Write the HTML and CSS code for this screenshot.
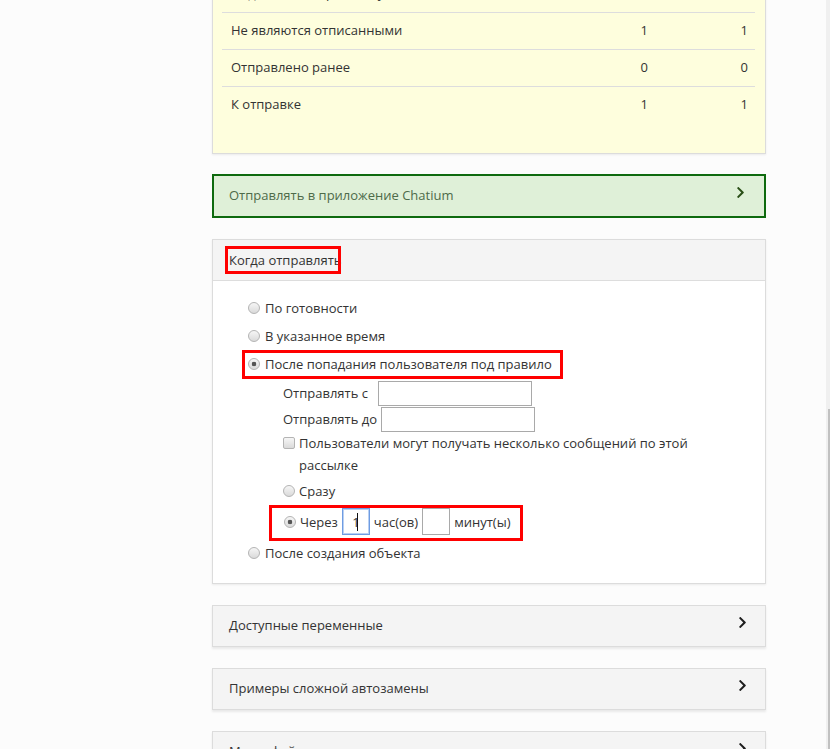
FILE: index.html
```html
<!DOCTYPE html>
<html lang="ru">
<head>
<meta charset="utf-8">
<title>Рассылка</title>
<link rel="stylesheet" href="styles.css">
</head>
<body>
<div class="page">
  <div class="panel panel-stats">
    <div class="stat-row"><span>Подписаны на рассылку</span><span class="num">1</span><span class="num">1</span></div>
    <div class="stat-row"><span>Не являются отписанными</span><span class="num">1</span><span class="num">1</span></div>
    <div class="stat-row"><span>Отправлено ранее</span><span class="num">0</span><span class="num">0</span></div>
    <div class="stat-row"><span>К отправке</span><span class="num">1</span><span class="num">1</span></div>
  </div>

  <div class="panel panel-success">
    <span>Отправлять в приложение Chatium</span>
    <svg class="chev" viewBox="0 0 320 512"><path d="M285.476 272.971L91.132 467.314c-9.373 9.373-24.569 9.373-33.941 0l-22.667-22.667c-9.357-9.357-9.375-24.522-.04-33.901L188.505 256 34.484 101.255c-9.335-9.379-9.317-24.544.04-33.901l22.667-22.667c9.373-9.373 24.569-9.373 33.941 0L285.475 239.03c9.373 9.372 9.373 24.568.001 33.941z"/></svg>
  </div>

  <div class="panel panel-when">
    <div class="panel-heading"><span class="mark-title">Когда отправлять</span></div>
    <div class="panel-body">
      <div class="opt"><label class="choice"><input type="radio" name="when"> По готовности</label></div>
      <div class="opt"><label class="choice"><input type="radio" name="when"> В указанное время</label></div>
      <div class="opt"><label class="choice mark-rule"><input type="radio" name="when" checked> После попадания пользователя под правило</label></div>
      <div class="sub">
        <div class="field"><span class="lbl-from">Отправлять с</span><input type="text" class="txt"></div>
        <div class="field"><span>Отправлять до</span><input type="text" class="txt"></div>
        <label class="check"><input type="checkbox"><span class="check-text">Пользователи могут получать несколько сообщений по этой рассылке</span></label>
        <div class="opt opt-sub"><label class="choice"><input type="radio" name="delay"> Сразу</label></div>
        <div class="mark-delay">
          <input type="radio" name="delay" checked>
          <span>Через</span>
          <span class="caret-wrap"><input type="text" class="small focus" value="1"></span>
          <span>час(ов)</span>
          <input type="text" class="small">
          <span>минут(ы)</span>
        </div>
      </div>
      <div class="opt opt-last"><label class="choice"><input type="radio" name="when"> После создания объекта</label></div>
    </div>
  </div>

  <div class="panel panel-collapsed">
    <span>Доступные переменные</span>
    <svg class="chev" viewBox="0 0 320 512"><path d="M285.476 272.971L91.132 467.314c-9.373 9.373-24.569 9.373-33.941 0l-22.667-22.667c-9.357-9.357-9.375-24.522-.04-33.901L188.505 256 34.484 101.255c-9.335-9.379-9.317-24.544.04-33.901l22.667-22.667c9.373-9.373 24.569-9.373 33.941 0L285.475 239.03c9.373 9.372 9.373 24.568.001 33.941z"/></svg>
  </div>

  <div class="panel panel-collapsed">
    <span>Примеры сложной автозамены</span>
    <svg class="chev" viewBox="0 0 320 512"><path d="M285.476 272.971L91.132 467.314c-9.373 9.373-24.569 9.373-33.941 0l-22.667-22.667c-9.357-9.357-9.375-24.522-.04-33.901L188.505 256 34.484 101.255c-9.335-9.379-9.317-24.544.04-33.901l22.667-22.667c9.373-9.373 24.569-9.373 33.941 0L285.475 239.03c9.373 9.372 9.373 24.568.001 33.941z"/></svg>
  </div>

  <div class="panel panel-collapsed">
    <span>Медиафайлы</span>
    <svg class="chev" viewBox="0 0 320 512"><path d="M285.476 272.971L91.132 467.314c-9.373 9.373-24.569 9.373-33.941 0l-22.667-22.667c-9.357-9.357-9.375-24.522-.04-33.901L188.505 256 34.484 101.255c-9.335-9.379-9.317-24.544.04-33.901l22.667-22.667c9.373-9.373 24.569-9.373 33.941 0L285.475 239.03c9.373 9.372 9.373 24.568.001 33.941z"/></svg>
  </div>
</div>
<div class="scroll-track"><div class="scroll-thumb"></div></div>
</body>
</html>
```

FILE: styles.css
```css
* { box-sizing: border-box; }
html, body { margin: 0; }
body {
  background: #fcfcfc;
  font-family: "Open Sans", "Liberation Sans", sans-serif;
  font-size: 13px;
  color: #333;
  height: 749px;
  overflow: hidden;
}
.page {
  width: 554px;
  margin-left: 212px;
  margin-top: -36px;
}
.panel {
  border: 1px solid #dcdcdc;
  background: #fff;
  box-shadow: 0 1px 2px rgba(0, 0, 0, 0.07);
}

/* stats */
.panel-stats {
  background: #fefedd;
  padding: 10px 10px 30px 9px;
  margin-bottom: 20px;
}
.stat-row {
  display: grid;
  grid-template-columns: 1fr 100px 100px;
  align-items: center;
  height: 37px;
  border-top: 1px solid #dddddd;
  padding-left: 9px;
  padding-bottom: 2px;
}
.stat-row .num {
  text-align: right;
  padding-right: 7px;
}

/* success bar */
.panel-success {
  border: 2px solid #0e6a0e;
  background: #dff0d8;
  box-shadow: none;
  height: 44px;
  display: flex;
  align-items: center;
  justify-content: space-between;
  padding: 0 19px 2px 15px;
  color: #4e6b4a;
  margin-bottom: 21px;
}
.panel-success .chev { fill: #2a4f17; margin-bottom: 6px; }

.chev {
  width: 9px;
  height: 13px;
  fill: #1e1e1e;
  margin-bottom: 5px;
  flex: none;
}

/* when panel */
.panel-when { margin-bottom: 21px; }
.panel-heading {
  background: #f4f4f4;
  height: 41px;
  border-bottom: 1px solid #dddddd;
  padding-left: 16px;
  padding-bottom: 1px;
  display: flex;
  align-items: center;
}
.mark-title {
  display: inline-block;
  width: 108px;
  white-space: nowrap;
  line-height: 20px;
  outline: 3px solid #ff0000;
  outline-offset: 1px;
}
.panel-body {
  padding: 13px 0 19px 35px;
}
.opt {
  height: 28px;
  display: flex;
  align-items: center;
}
.choice {
  display: inline-flex;
  align-items: center;
  gap: 5px;
}
.mark-rule {
  height: 23px;
  padding: 0 8px 0 3px;
  margin-left: -3px;
  outline: 3px solid #ff0000;
}

input[type="radio"], input[type="checkbox"] {
  -webkit-appearance: none;
  appearance: none;
  margin: 0;
  width: 12px;
  height: 12px;
  border: 1px solid #b4b4b4;
  background: linear-gradient(#f6f6f6, #dadada);
  flex: none;
}
input[type="radio"] { border-radius: 50%; }
input[type="checkbox"] { border-radius: 2px; }
input[type="radio"]:checked {
  background: radial-gradient(circle, #555 0 2px, transparent 2.6px), linear-gradient(#f6f6f6, #dadada);
}

.sub {
  padding-left: 35px;
  margin-top: 2px;
}
.field {
  height: 26px;
  display: flex;
  align-items: center;
  gap: 4px;
}
.lbl-from { margin-right: 6px; }
.txt {
  width: 154px;
  height: 25px;
  border: 1px solid #a9a9a9;
  background: #fff;
  margin: 0;
  font: inherit;
}
.check {
  display: flex;
  align-items: flex-start;
  gap: 4px;
  line-height: 22px;
}
.check input { margin-top: 5px; }
.check-text { width: 400px; }

.opt-sub { margin-top: 1px; }
.opt-sub .choice { gap: 4px; }

.mark-delay {
  display: inline-flex;
  align-items: center;
  gap: 4px;
  height: 36px;
  border: 3px solid #ff0000;
  padding: 0 10px 3px 12px;
  margin-left: -14px;
}
.small {
  width: 28px;
  height: 27px;
  border: 1px solid #a9a9a9;
  background: #fff;
  margin: 0;
  font: inherit;
  color: #333;
  text-align: center;
  padding: 0;
}
.small.focus {
  border-color: #6f9ce2;
  box-shadow: inset 0 0 0 1px #b9d0f3;
}
.caret-wrap { position: relative; display: inline-flex; }
.caret-wrap::after {
  content: "";
  position: absolute;
  left: 15px;
  top: 5px;
  width: 1px;
  height: 18px;
  background: #111;
}
.opt-last { height: 23px; }

/* collapsed panels */
.panel-collapsed {
  background: #f4f4f4;
  height: 42px;
  display: flex;
  align-items: center;
  justify-content: space-between;
  padding: 0 18px 2px 16px;
  margin-bottom: 21px;
  box-shadow: 0 2px 2px rgba(0, 0, 0, 0.08);
}

/* page scrollbar */
.scroll-track {
  position: fixed;
  top: 0;
  right: 0;
  width: 4px;
  height: 749px;
  background: #f0f0f0;
}
.scroll-thumb {
  position: absolute;
  top: 409px;
  right: 0;
  width: 2px;
  bottom: 0;
  background: #c1c1c1;
}
```
